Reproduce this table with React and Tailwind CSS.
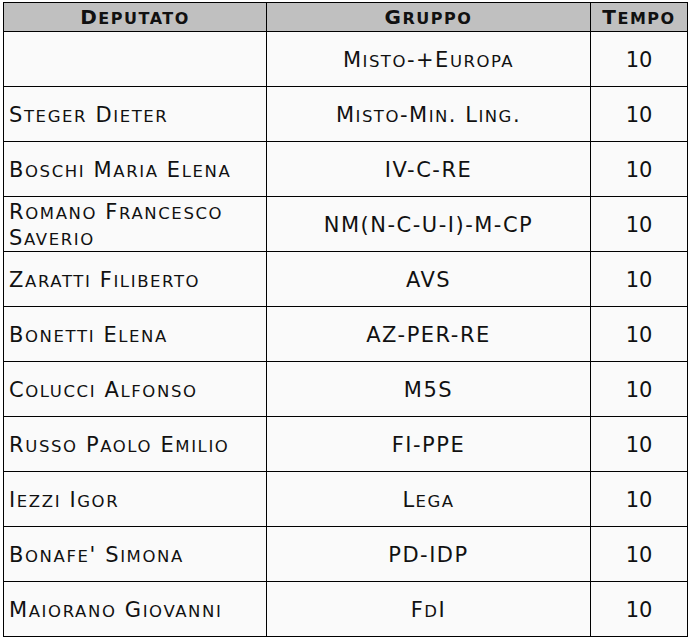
import React from "react";

const rows = [
  { nome: "", gruppo: "Misto-+Europa", tempo: "10" },
  { nome: "Steger Dieter", gruppo: "Misto-Min. Ling.", tempo: "10" },
  { nome: "Boschi Maria Elena", gruppo: "IV-C-RE", tempo: "10" },
  { nome: "Romano Francesco Saverio", gruppo: "NM(N-C-U-I)-M-CP", tempo: "10" },
  { nome: "Zaratti Filiberto", gruppo: "AVS", tempo: "10" },
  { nome: "Bonetti Elena", gruppo: "AZ-PER-RE", tempo: "10" },
  { nome: "Colucci Alfonso", gruppo: "M5S", tempo: "10" },
  { nome: "Russo Paolo Emilio", gruppo: "FI-PPE", tempo: "10" },
  { nome: "Iezzi Igor", gruppo: "Lega", tempo: "10" },
  { nome: "Bonafe' Simona", gruppo: "PD-IDP", tempo: "10" },
  { nome: "Maiorano Giovanni", gruppo: "FdI", tempo: "10" },
];

// small caps a mano: le minuscole diventano maiuscole più piccole
const SmallCaps = ({ text, small = "text-[16.5px]" }) => {
  const parts = [];
  let cur = "";
  let isLow = null;
  for (const ch of text) {
    const low = ch !== ch.toUpperCase();
    if (isLow !== null && low !== isLow) {
      parts.push({ t: cur, low: isLow });
      cur = "";
    }
    isLow = low;
    cur += ch;
  }
  if (cur) parts.push({ t: cur, low: isLow });
  return (
    <>
      {parts.map((p, i) =>
        p.low ? (
          <span key={i} className={`${small} leading-none`}>
            {p.t.toUpperCase()}
          </span>
        ) : (
          <span key={i}>{p.t}</span>
        )
      )}
    </>
  );
};

const App = () => {
  return (
    <div className="w-[690px] h-[638px] overflow-hidden bg-white pt-[2px] pl-[3px] font-['DejaVu_Sans',sans-serif] text-[#111]">
      <table className="border-collapse w-[684px] table-fixed">
        <colgroup>
          <col className="w-[263px]" />
          <col className="w-[324px]" />
          <col className="w-[97px]" />
        </colgroup>
        <thead>
          <tr className="h-[29px] bg-[#c0c0c0]">
            <th className="border border-black p-0 text-[20px] font-bold leading-none tracking-[1.5px]">
              <SmallCaps text="Deputato" small="text-[16px]" />
            </th>
            <th className="border border-black p-0 text-[20px] font-bold leading-none tracking-[1.5px]">
              <SmallCaps text="Gruppo" small="text-[16px]" />
            </th>
            <th className="border border-black p-0 text-[20px] font-bold leading-none tracking-[1.5px]">
              <SmallCaps text="Tempo" small="text-[16px]" />
            </th>
          </tr>
        </thead>
        <tbody className="bg-[#fafafa]">
          {rows.map((r, i) => (
            <tr key={i} className="h-[55px]">
              <td className="border border-black pt-[2px] pb-0 pl-[5px] pr-[4px] text-[21px] leading-[26px] tracking-[1.6px] text-left align-middle">
                <SmallCaps text={r.nome} />
              </td>
              <td className="border border-black pt-[2px] pb-0 px-0 text-[21px] leading-[26px] tracking-[1.5px] text-center align-middle">
                <SmallCaps text={r.gruppo} />
              </td>
              <td className="border border-black pt-[2px] pb-0 px-0 text-[21px] leading-[26px] text-center align-middle">
                {r.tempo}
              </td>
            </tr>
          ))}
        </tbody>
      </table>
    </div>
  );
};

export default App;
